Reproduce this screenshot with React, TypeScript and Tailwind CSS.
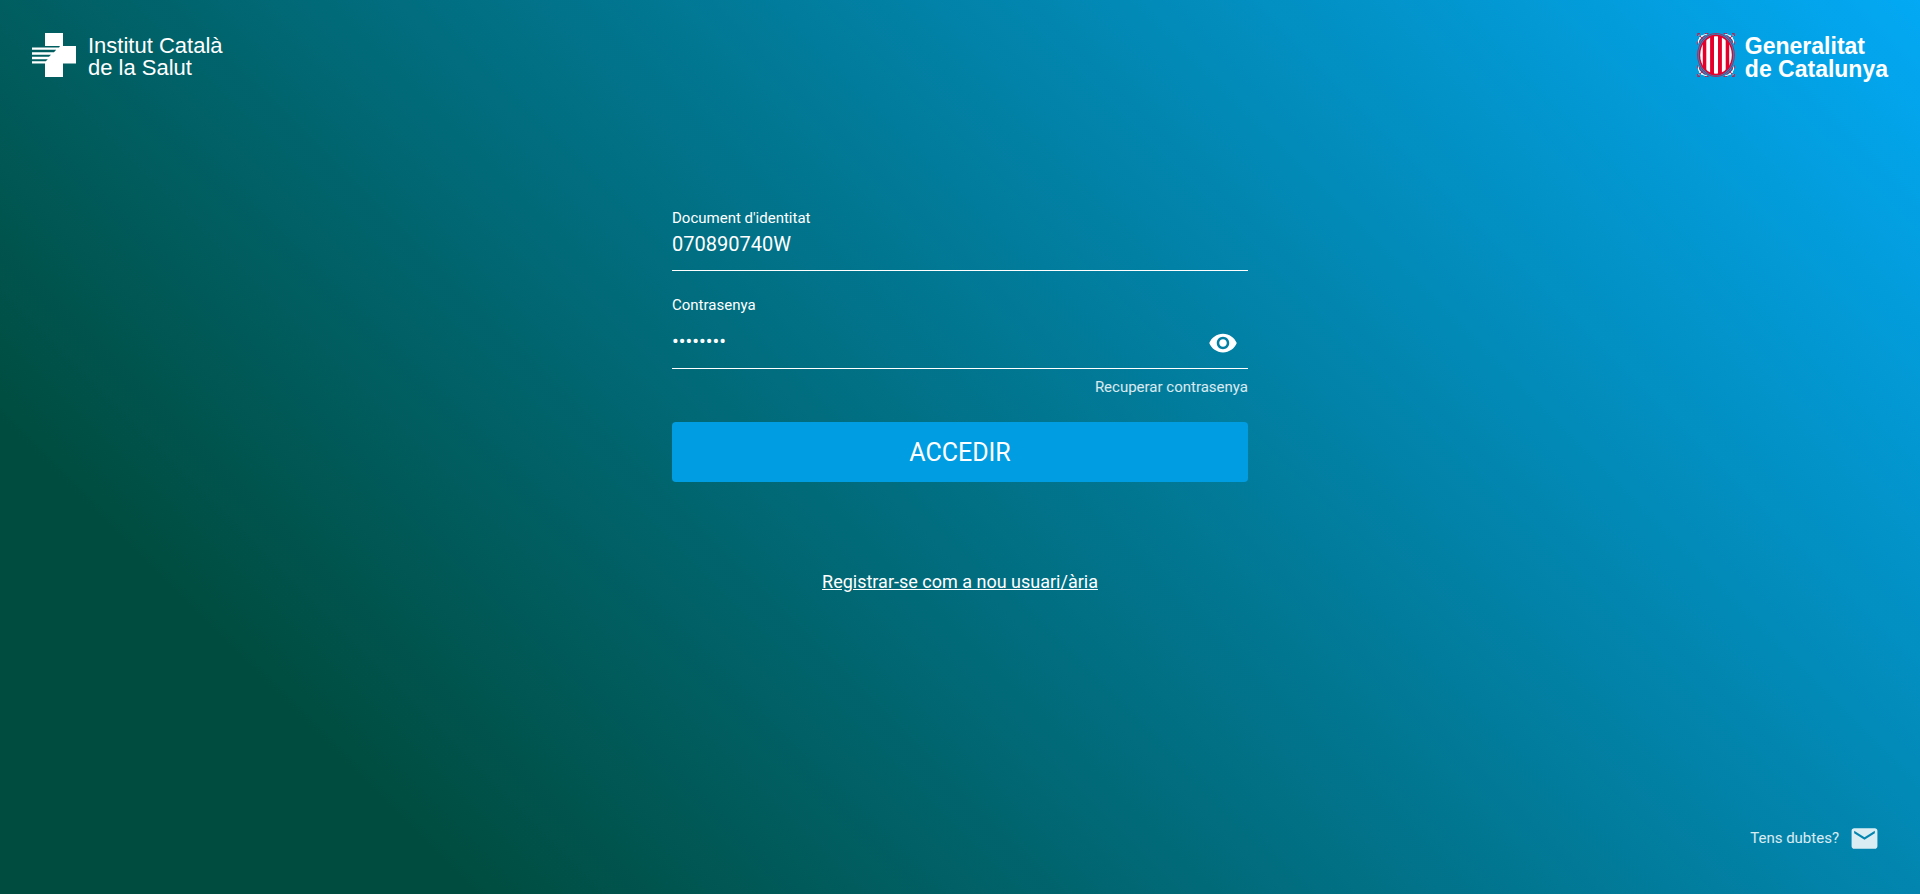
import { useState } from 'react';
import { MdEmail, MdVisibility } from 'react-icons/md';

function HealthCross() {
  return (
    <svg viewBox="0 0 44 44" className="size-11 shrink-0" fill="#fff" aria-hidden="true">
      <path d="M13 0h18v13h13v17.5H31V44H13V30.5H0v-2.2h13.8l2-2.1H0v-2.4h17l2-2H0v-2.6h22l2.2-2.4H0v-2.2h27l1-1.6H0V13h13z" />
    </svg>
  );
}

function CornerOrnament({ transform }: { transform?: string }) {
  return (
    <g transform={transform} fill="none">
      <path d="M1 10.5C1.2 6.5 4 2.4 10 1" stroke="#fff" strokeWidth="1.2" />
      <path d="M.6 11.5V8.5M.6 3V.6H3M8 .6h3.5" stroke="#e4002b" strokeWidth=".8" />
      <path d="M1 1l5 5.4M2.4 9.6C3 7 4.6 4.6 8.4 2.6" stroke="#e4002b" strokeWidth=".9" />
      <path d="M2 4.4l1.6 1.2M4.4 2l1.2 1.4M1.4 1.8l.8.8" stroke="#fff" strokeWidth=".9" />
    </g>
  );
}

function CatalanSeal() {
  return (
    <svg viewBox="0 0 38 44" className="h-11 w-[38px] shrink-0" aria-hidden="true">
      <defs>
        <clipPath id="seal-oval">
          <ellipse cx="19" cy="22" rx="15.8" ry="18.8" />
        </clipPath>
      </defs>
      <CornerOrnament />
      <CornerOrnament transform="translate(38 0) scale(-1 1)" />
      <CornerOrnament transform="translate(0 44) scale(1 -1)" />
      <CornerOrnament transform="translate(38 44) scale(-1 -1)" />
      <ellipse cx="19" cy="22" rx="18.4" ry="21.5" fill="none" stroke="#e4002b" strokeWidth=".7" />
      <ellipse cx="19" cy="22" rx="17.2" ry="20.6" fill="#e4002b" />
      <path
        clipPath="url(#seal-oval)"
        d="M3 10h2.8v24H3zM9.3 4h3.8v36H9.3zM17 2h4v40h-4zM24.9 4h3.8v36h-3.8zM32.2 10H35v24h-2.8z"
        fill="#fff"
      />
    </svg>
  );
}

export default function App() {
  const [documentId, setDocumentId] = useState('070890740W');
  const [password, setPassword] = useState('contra24');
  const [visible, setVisible] = useState(false);

  return (
    <div className="flex min-h-screen flex-col bg-[linear-gradient(45deg,#004d40_17%,#03a9f4_100%)] font-[Roboto,sans-serif] text-white">
      <header className="flex h-20 items-start justify-between px-8 pt-[33px]">
        <div className="flex items-start gap-3">
          <HealthCross />
          <p className="pt-0.5 font-['Liberation_Sans',Arial,sans-serif] text-[22px] leading-[22px]">
            Institut Català
            <br />
            de la Salut
          </p>
        </div>
        <div className="flex items-start gap-2.5">
          <CatalanSeal />
          <p className="pt-0.5 font-['Liberation_Sans',Arial,sans-serif] text-[23px] leading-[23px] font-bold">
            Generalitat
            <br />
            de Catalunya
          </p>
        </div>
      </header>

      <main className="mx-auto flex w-3/10 min-w-72 grow flex-col pt-32">
        <form className="flex flex-col" onSubmit={(event) => event.preventDefault()}>
          <label htmlFor="document" className="text-[15px] leading-5">
            Document d'identitat
          </label>
          <input
            id="document"
            type="text"
            value={documentId}
            onChange={(event) => setDocumentId(event.target.value)}
            className="h-[43px] w-full border-b border-white bg-transparent pb-2.5 text-xl outline-none"
          />

          <label htmlFor="password" className="mt-6 text-[15px] leading-5">
            Contrasenya
          </label>
          <div className="flex h-[54px] items-center border-b border-white pr-2.5">
            <input
              id="password"
              type={visible ? 'text' : 'password'}
              value={password}
              onChange={(event) => setPassword(event.target.value)}
              className="min-w-0 grow bg-transparent pb-0.5 text-xl outline-none"
            />
            <button type="button" aria-label="Mostrar contrasenya" className="pt-0.5" onClick={() => setVisible(!visible)}>
              <MdVisibility className="size-[30px]" />
            </button>
          </div>

          <a href="#recuperar" className="mt-2 self-end text-[15px] leading-[21px] text-white/85">
            Recuperar contrasenya
          </a>
          <button type="submit" className="mt-6 h-[60px] rounded bg-[#009de3] pt-0.5 text-[25px]">
            ACCEDIR
          </button>
        </form>
        <a href="#registre" className="mt-[86px] self-center text-lg leading-7 underline">
          Registrar-se com a nou usuari/ària
        </a>
      </main>

      <footer className="flex justify-end px-10 pb-10">
        <a href="#dubtes" className="flex items-center gap-2.5 text-[15px] text-white/85">
          Tens dubtes?
          <MdEmail className="size-[31px]" />
        </a>
      </footer>
    </div>
  );
}
